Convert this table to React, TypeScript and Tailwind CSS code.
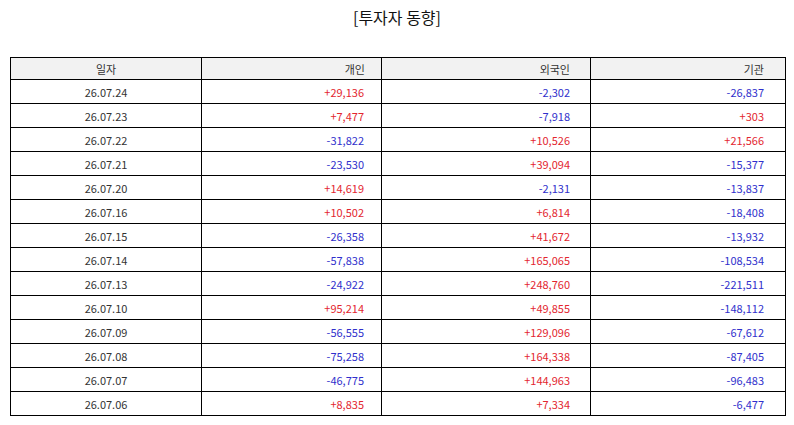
import React from "react";

const rows: [string, string, string, string][] = [
  ["26.07.24", "+29,136", "-2,302", "-26,837"],
  ["26.07.23", "+7,477", "-7,918", "+303"],
  ["26.07.22", "-31,822", "+10,526", "+21,566"],
  ["26.07.21", "-23,530", "+39,094", "-15,377"],
  ["26.07.20", "+14,619", "-2,131", "-13,837"],
  ["26.07.16", "+10,502", "+6,814", "-18,408"],
  ["26.07.15", "-26,358", "+41,672", "-13,932"],
  ["26.07.14", "-57,838", "+165,065", "-108,534"],
  ["26.07.13", "-24,922", "+248,760", "-221,511"],
  ["26.07.10", "+95,214", "+49,855", "-148,112"],
  ["26.07.09", "-56,555", "+129,096", "-67,612"],
  ["26.07.08", "-75,258", "+164,338", "-87,405"],
  ["26.07.07", "-46,775", "+144,963", "-96,483"],
  ["26.07.06", "+8,835", "+7,334", "-6,477"],
];

function Num({ v, pr }: { v: string; pr: string }) {
  const color = v.startsWith("+") ? "text-[#e3262f]" : "text-[#3030cc]";
  return (
    <td className={`border border-black text-right ${pr} ${color}`}>{v}</td>
  );
}

export default function App() {
  return (
    <div
      className="w-[794px] h-[425px] bg-white text-[#333]"
      style={{ fontFamily: '"Noto Sans CJK KR", "Noto Sans", sans-serif' }}
    >
      <div className="pt-[6px] text-center text-[16px] leading-[22px] text-[#111]">
        [투자자 동향]
      </div>
      <div className="mt-[29px] px-[10px]">
        <table className="w-[775px] border-collapse text-[11px] leading-[14px] table-fixed">
          <colgroup>
            <col className="w-[191px]" />
            <col className="w-[180px]" />
            <col className="w-[209px]" />
            <col className="w-[195px]" />
          </colgroup>
          <thead>
            <tr className="h-[22px] bg-[#f2f2f2]">
              <th className="border border-black font-normal text-center">일자</th>
              <th className="border border-black font-normal text-right pr-[16px]">개인</th>
              <th className="border border-black font-normal text-right pr-[20px]">외국인</th>
              <th className="border border-black font-normal text-right pr-[21px]">기관</th>
            </tr>
          </thead>
          <tbody>
            {rows.map((r) => (
              <tr key={r[0]} className="h-[24px]">
                <td className="border border-black text-center">{r[0]}</td>
                <Num v={r[1]} pr="pr-[17px]" />
                <Num v={r[2]} pr="pr-[20px]" />
                <Num v={r[3]} pr="pr-[21px]" />
              </tr>
            ))}
          </tbody>
        </table>
      </div>
    </div>
  );
}
